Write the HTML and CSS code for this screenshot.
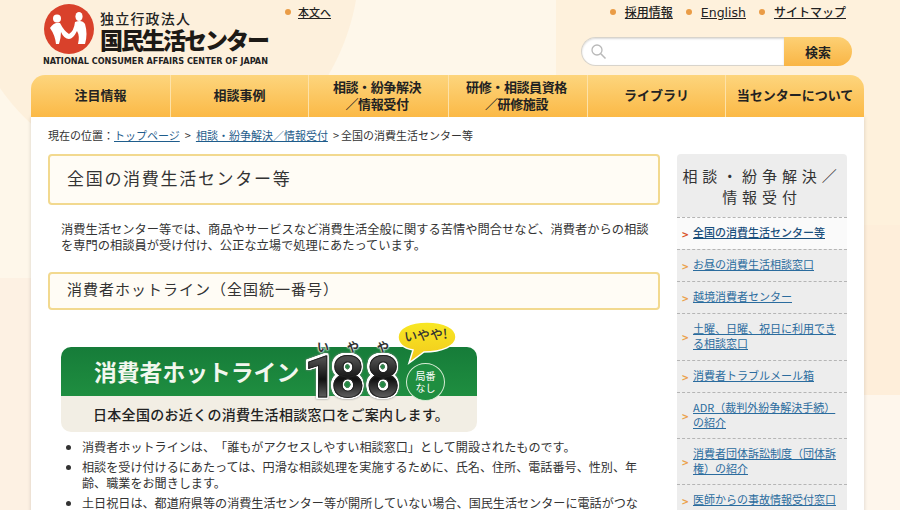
FILE: index.html
```html
<!DOCTYPE html>
<html lang="ja">
<head>
    <meta charset="UTF-8">
    <meta name="viewport" content="width=device-width, initial-scale=1.0">
    <title>全国の消費生活センター等</title>
    <link rel="stylesheet" href="styles.css">
</head>
<body>
    <div class="page">
        <!-- Header -->
        <header class="header">
            <div class="logo">
                <div class="logo-top">
                    <svg class="logo-mark" width="50" height="50" viewBox="0 0 50 50">
                        <circle cx="25" cy="25" r="25" fill="#d9412b"/>
                        <circle cx="13" cy="14.5" r="4" fill="#fff"/>
                        <ellipse cx="35" cy="12.5" rx="3.6" ry="4.6" fill="#fff"/>
                        <path d="M6 24 Q10 18 16 19 Q20 27 25 30 Q30 27 31 18 Q38 15 41 20 Q44 30 41 40 L34 40 Q36 32 33 27 Q29 35 25 35 Q20 35 17 28 Q17 34 15 40 L12 40 Q11 31 6 24 Z" fill="#fff"/>
                    </svg>
                    <div class="logo-names">
                        <span class="logo-small">独立行政法人</span>
                        <span class="logo-big">国民生活センター</span>
                    </div>
                </div>
                <div class="logo-en">NATIONAL CONSUMER AFFAIRS CENTER OF JAPAN</div>
            </div>
            <a class="skip-link dot-link" href="#main">本文へ</a>
            <div class="header-right">
                <ul class="util-links">
                    <li><a class="dot-link" href="#">採用情報</a></li>
                    <li><a class="dot-link latin" href="#">English</a></li>
                    <li><a class="dot-link" href="#">サイトマップ</a></li>
                </ul>
                <form class="search">
                    <div class="search-input">
                        <svg width="18" height="18" viewBox="0 0 18 18">
                            <circle cx="7" cy="7" r="5" fill="none" stroke="#b9b9b9" stroke-width="1.3"/>
                            <path d="M10.8 10.8 L15.5 15.5" stroke="#b9b9b9" stroke-width="1.6"/>
                        </svg>
                    </div>
                    <button class="search-button" type="button">検索</button>
                </form>
            </div>
        </header>

        <!-- Global navigation -->
        <nav class="gnav">
            <a href="#" class="w139">注目情報</a>
            <a href="#" class="w138">相談事例</a>
            <a href="#" class="w140 tight">相談・紛争解決<br>／情報受付</a>
            <a href="#" class="w139 tight">研修・相談員資格<br>／研修施設</a>
            <a href="#" class="w138">ライブラリ</a>
            <a href="#" class="w139">当センターについて</a>
        </nav>

        <div class="content">
            <p class="breadcrumb">現在の位置：<a href="#">トップページ</a><span class="sep">&gt;</span><a href="#">相談・紛争解決／情報受付</a><span class="sep last">&gt;</span>全国の消費生活センター等</p>

            <div class="columns">
                <main class="main" id="main">
                    <h1 class="title-box">全国の消費生活センター等</h1>
                    <p class="lead">消費生活センター等では、商品やサービスなど消費生活全般に関する苦情や問合せなど、消費者からの相談を専門の相談員が受け付け、公正な立場で処理にあたっています。</p>
                    <h2 class="title-box small">消費者ホットライン（全国統一番号）</h2>

                    <div class="banner">
                        <div class="banner-top">消費者ホットライン</div>
                        <div class="banner-bottom">日本全国のお近くの消費生活相談窓口をご案内します。</div>
                        <div class="banner-ruby"><span>い</span><span>や</span><span>や</span></div>
                        <div class="banner-num"><span class="num-one">1</span>88</div>
                        <div class="banner-circle">局番<br>なし</div>
                        <svg class="banner-bubble" width="62" height="44" viewBox="0 0 62 44">
                            <defs>
                                <linearGradient id="bubbleFill" x1="0" y1="0" x2="0" y2="1">
                                    <stop offset="0" stop-color="#f8e824"/>
                                    <stop offset="1" stop-color="#f2c81c"/>
                                </linearGradient>
                            </defs>
                            <path d="M31 1 C48 1 60 7 60 16 C60 25 46 31 28 31 L13 42 L17 29 C7 27 2 22 2 16 C2 7 14 1 31 1 Z" fill="url(#bubbleFill)" stroke="#fff" stroke-width="1.5"/>
                        </svg>
                        <div class="banner-bubble-text">いやや!</div>
                    </div>

                    <ul class="notes">
                        <li>消費者ホットラインは、「誰もがアクセスしやすい相談窓口」として開設されたものです。</li>
                        <li>相談を受け付けるにあたっては、円滑な相談処理を実施するために、氏名、住所、電話番号、性別、年齢、職業をお聞きします。</li>
                        <li>土日祝日は、都道府県等の消費生活センター等が開所していない場合、国民生活センターに電話がつながります。</li>
                    </ul>
                </main>

                <aside class="side">
                    <h2 class="side-title">相談・紛争解決／<br>情報受付</h2>
                    <ul class="side-list">
                        <li class="current"><a href="#">全国の消費生活センター等</a></li>
                        <li><a href="#">お昼の消費生活相談窓口</a></li>
                        <li><a href="#">越境消費者センター</a></li>
                        <li><a href="#">土曜、日曜、祝日に利用できる相談窓口</a></li>
                        <li><a href="#">消費者トラブルメール箱</a></li>
                        <li class="compact"><a href="#">ADR（裁判外紛争解決手続）の紹介</a></li>
                        <li class="compact"><a href="#">消費者団体訴訟制度（団体訴権）の紹介</a></li>
                        <li><a href="#">医師からの事故情報受付窓口</a></li>
                    </ul>
                </aside>
            </div>
        </div>
    </div>
</body>
</html>
```

FILE: styles.css
```css
* {
    margin: 0;
    padding: 0;
    box-sizing: border-box;
}

html, body {
    height: 510px;
    overflow: hidden;
}

body {
    font-family: "Noto Sans CJK JP", "Noto Sans", sans-serif;
    font-size: 12px;
    color: #333;
    text-spacing-trim: space-all;
    background-color: #fdf1e3;
    background-repeat: no-repeat;
    background-image:
        radial-gradient(ellipse 200px 215px at 160px -40px, #fdf0dc 0, #fdf0dc 99.5%, transparent 100%),
        linear-gradient(#fef7ea, #fef7ea),
        linear-gradient(#fef1dc 0, #fef1dc 225px, #feeeda 225px, #feeeda 395px, #fef6ec 395px);
    background-position: 0 0, 0 0, 556px 0;
    background-size: 100% 100%, 556px 278px, 344px 510px;
}

a {
    color: #1f5d8c;
}

ul {
    list-style: none;
}

.page {
    width: 900px;
}

/* Header */
.header {
    position: relative;
    height: 75px;
    padding: 4px 54px 0 44px;
    display: flex;
    justify-content: space-between;
}

.logo-top {
    display: flex;
    gap: 6px;
}

.logo-mark {
    flex: none;
}

.logo-names {
    display: flex;
    flex-direction: column;
    padding-top: 6px;
}

.logo-small {
    font-size: 14px;
    font-weight: 500;
    line-height: 16px;
    letter-spacing: 1.2px;
    color: #222;
}

.logo-big {
    font-size: 23px;
    font-weight: 900;
    line-height: 26px;
    letter-spacing: -2px;
    color: #1d1a16;
}

.logo-en {
    font-family: "DejaVu Sans Condensed", "DejaVu Sans", sans-serif;
    font-size: 9px;
    font-weight: bold;
    line-height: 11px;
    margin: 2px 0 0 -1px;
    white-space: nowrap;
    color: #222;
}

.dot-link {
    color: #222;
    font-size: 12px;
    font-weight: 500;
}

.dot-link::before {
    content: "";
    display: inline-block;
    width: 6px;
    height: 6px;
    border-radius: 50%;
    background: #ea9c46;
    margin-right: 7px;
    vertical-align: 2px;
}

.util-links .dot-link::before {
    margin-right: 9px;
}

.latin {
    font-family: "DejaVu Sans", sans-serif;
    font-size: 12.5px;
}

.skip-link {
    position: absolute;
    left: 285px;
    top: 4px;
    font-size: 11px;
}

.header-right {
    display: flex;
    flex-direction: column;
    align-items: flex-end;
    gap: 16px;
}

.util-links {
    display: flex;
    gap: 13px;
    line-height: 16px;
}

.search {
    display: flex;
    width: 271px;
    height: 29px;
    margin-right: -6px;
}

.search-input {
    flex: 1;
    background: #fff;
    border: 1px solid #d8d4cc;
    border-right: none;
    border-radius: 15px 0 0 15px;
    box-shadow: inset 0 1px 2px rgba(0, 0, 0, 0.15);
    padding: 5px 0 0 8px;
}

.search-button {
    width: 68px;
    border: none;
    border-radius: 0 15px 15px 0;
    background: linear-gradient(#fdd074, #f9b545);
    font-family: inherit;
    font-size: 13px;
    font-weight: 700;
    color: #222;
}

/* Global navigation */
.gnav {
    position: relative;
    display: flex;
    width: 833px;
    height: 42px;
    margin-left: 31px;
    border-radius: 14px 14px 0 0;
    overflow: hidden;
    background: linear-gradient(#fdd57d, #fbb946);
}

.gnav a {
    display: flex;
    align-items: center;
    justify-content: center;
    text-align: center;
    font-size: 13px;
    font-weight: 700;
    line-height: 17px;
    padding-bottom: 3px;
    color: #222;
    text-decoration: none;
    border-left: 1px solid #fde2a8;
    white-space: nowrap;
}

.gnav a:first-child {
    border-left: none;
}

.gnav .tight {
    letter-spacing: -0.4px;
    padding-right: 3px;
}

.w138 { width: 138px; }
.w139 { width: 139px; }
.w140 { width: 140px; }

/* Content */
.content {
    width: 833px;
    margin-left: 31px;
    padding: 10px 17px 0;
    background: #fff;
    height: 400px;
    box-shadow: 0 0 4px rgba(0, 0, 0, 0.15);
}

.breadcrumb {
    font-size: 11px;
    line-height: 17px;
    margin-bottom: 10px;
    white-space: nowrap;
}

.sep {
    margin: 0 5px;
}

.sep.last {
    margin-right: 2px;
}

.columns {
    display: flex;
    justify-content: space-between;
}

.main {
    width: 612px;
}

.title-box {
    font-size: 17px;
    font-weight: 400;
    letter-spacing: 1.7px;
    color: #333;
    height: 51px;
    line-height: 43px;
    padding-left: 17px;
    border: 2px solid #f2d98f;
    border-radius: 4px;
    background: #fffcf5;
}

.title-box.small {
    height: 38px;
    line-height: 30px;
    font-size: 15px;
    letter-spacing: 1px;
}

.lead {
    font-size: 12.25px;
    line-height: 16px;
    padding: 16px 10px 0 13px;
    margin-bottom: 19px;
}

/* Hotline banner */
.banner {
    position: relative;
    width: 416px;
    height: 85px;
    margin: 37px 0 7px 13px;
    border-radius: 10px;
}

.banner-top {
    height: 49px;
    padding: 8px 0 0 33px;
    border-radius: 10px 10px 0 0;
    background: linear-gradient(#167c39, #1f8e40);
    color: #f2f7ee;
    font-size: 22.8px;
    font-weight: 700;
    line-height: 33px;
}

.banner-bottom {
    height: 36px;
    border-radius: 0 0 10px 10px;
    background: #f2eee4;
    color: #222;
    font-size: 14px;
    font-weight: 500;
    line-height: 36px;
    padding-left: 32px;
    letter-spacing: 0.3px;
}

.banner-ruby {
    position: absolute;
    left: 256px;
    top: -8px;
    display: flex;
    gap: 18px;
    font-size: 12px;
    line-height: 16px;
    font-weight: 700;
    color: #333;
    text-shadow: 0 0 2px #fff, 0 0 2px #fff, 0 0 2px #fff;
}

.banner-num {
    position: absolute;
    left: 243px;
    top: 8px;
    font-family: Roboto, "Liberation Sans", sans-serif;
    font-size: 58px;
    font-weight: 700;
    line-height: 44px;
    letter-spacing: 2px;
    background: linear-gradient(#4c4c4c 10%, #111 55%, #5c5c5c 95%);
    -webkit-background-clip: text;
    background-clip: text;
    color: transparent;
    -webkit-text-stroke: 1px #222;
    filter: drop-shadow(1.5px 0 0 #fff) drop-shadow(-1.5px 0 0 #fff) drop-shadow(0 1.5px 0 #fff) drop-shadow(0 -1.5px 0 #fff) drop-shadow(0 0 1px #888);
}

.num-one {
    margin-right: -8px;
}

.banner-circle {
    position: absolute;
    left: 345px;
    top: 16px;
    width: 39px;
    height: 38px;
    border: 1px solid #d8ecd5;
    border-radius: 50%;
    font-size: 10px;
    line-height: 12px;
    text-align: center;
    padding-top: 6px;
    color: #fff;
    background: #1f8e40;
}

.banner-bubble {
    position: absolute;
    left: 335px;
    top: -26px;
}

.banner-bubble-text {
    position: absolute;
    left: 343px;
    top: -21px;
    font-size: 13px;
    line-height: 18px;
    font-weight: 500;
    color: #333;
    transform: rotate(-4deg);
}

.notes {
    list-style: disc;
    padding: 0 14px 0 34px;
    font-size: 12.1px;
    line-height: 16px;
}

.notes li {
    margin-bottom: 4px;
}

/* Sidebar */
.side {
    width: 170px;
}

.side-title {
    padding: 11px 0 0;
    font-size: 15px;
    font-weight: 400;
    line-height: 21px;
    letter-spacing: 4.9px;
    text-align: center;
    white-space: nowrap;
    color: #333;
    background: #ededed;
    border-radius: 4px 4px 0 0;
    height: 63px;
}

.side-list li {
    padding: 7px 8px 9px 16px;
    border-top: 1px dashed #b5b5b5;
    background: #ededed;
    font-size: 11px;
    line-height: 15px;
    position: relative;
}

.side-list li.compact {
    padding-bottom: 8px;
}

.side-list li::before {
    content: ">";
    position: absolute;
    left: 5px;
    top: 50%;
    transform: translateY(-50%);
    font-weight: 700;
    color: #eba14b;
}

.side-list a {
    color: #2b6c9e;
}

.side-list .current {
    background: #fafafa;
}

.side-list .current a {
    color: #1a4f7c;
    font-weight: 500;
}

.side-list .current::before {
    color: #d9542b;
}
```
